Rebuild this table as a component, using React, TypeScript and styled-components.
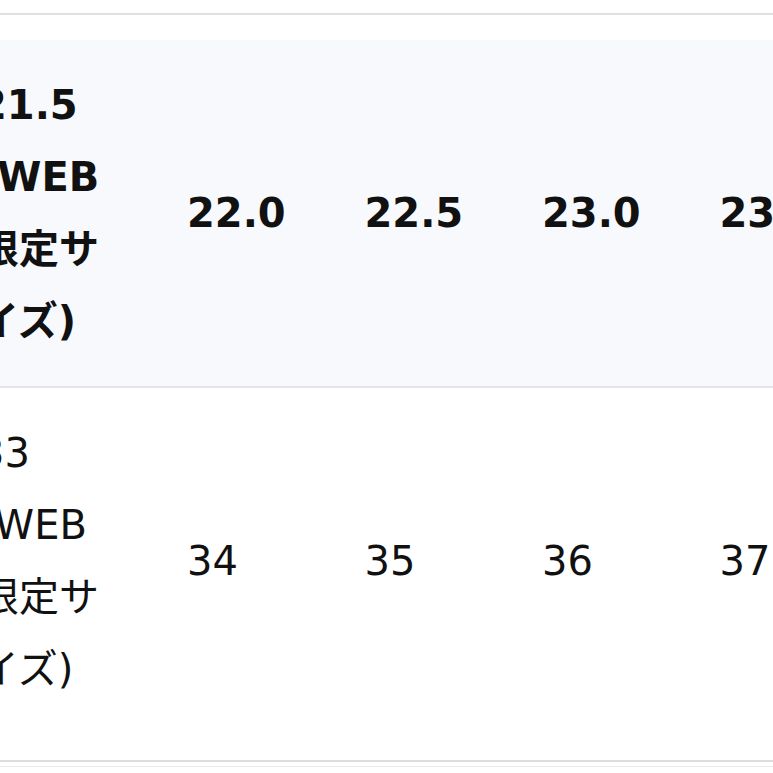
import { useEffect, useRef } from "react";
import styled, { createGlobalStyle } from "styled-components";

const GlobalStyle = createGlobalStyle`
  html, body {
    margin: 0;
    padding: 0;
    background: #ffffff;
  }
  body {
    font-family: "DejaVu Sans", "Noto Sans CJK JP", sans-serif;
    color: #111111;
  }
`;

const sizes = ["22.0", "22.5", "23.0", "23.5", "24.0", "24.5", "25.0"];
const euro = ["34", "35", "36", "37", "38", "39", "40"];

export default function App() {
  const scrollRef = useRef<HTMLDivElement>(null);

  useEffect(() => {
    // the table sits scrolled a little to the right, like in the shot
    if (scrollRef.current) scrollRef.current.scrollLeft = 37;
  }, []);

  return (
    <Page>
      <GlobalStyle />
      <Section>
        <Scroller ref={scrollRef}>
          <SizeTable>
            <colgroup>
              <col style={{ width: 208 }} />
              {sizes.map((s) => (
                <col key={s} style={{ width: 177.5 }} />
              ))}
            </colgroup>
            <thead>
              <HeadRow>
                <Cell as="th" $bold>
                  <Label>21.5 (WEB限定サイズ)</Label>
                </Cell>
                {sizes.map((s) => (
                  <Cell as="th" key={s} $bold>
                    {s}
                  </Cell>
                ))}
              </HeadRow>
            </thead>
            <tbody>
              <BodyRow>
                <Cell>
                  <Label>33 (WEB限定サイズ)</Label>
                </Cell>
                {euro.map((e) => (
                  <Cell key={e}>{e}</Cell>
                ))}
              </BodyRow>
            </tbody>
          </SizeTable>
        </Scroller>
      </Section>
      <Footer />
    </Page>
  );
}

const Page = styled.div`
  padding-top: 13px;
  width: 773px;
  height: 773px;
  overflow: hidden;
`;

const Section = styled.div`
  border-top: 2px solid #e0e0e0;
  border-bottom: 2px solid #dddddd;
  padding: 25px 0 26px;
`;

const Scroller = styled.div`
  overflow-x: auto;
  scrollbar-width: none;
  &::-webkit-scrollbar {
    display: none;
  }
`;

const SizeTable = styled.table`
  border-collapse: collapse;
  table-layout: fixed;
  width: ${208 + 177.5 * 7}px;
`;

const HeadRow = styled.tr`
  background: #f7f9fc;
  border-bottom: 2px solid #e4e5e8;
`;

const BodyRow = styled.tr`
  background: #ffffff;
`;

const Cell = styled.td<{ $bold?: boolean }>`
  padding: 29px 0 29px 16px;
  text-align: left;
  vertical-align: middle;
  font-size: 40px;
  line-height: 72px;
  font-weight: ${(p) => (p.$bold ? 700 : 400)};
  white-space: nowrap;
`;

const Label = styled.span`
  display: block;
  width: 125px;
  white-space: normal;
`;

const Footer = styled.div`
  margin-top: 4px;
  border-top: 1px solid #ececec;
`;
